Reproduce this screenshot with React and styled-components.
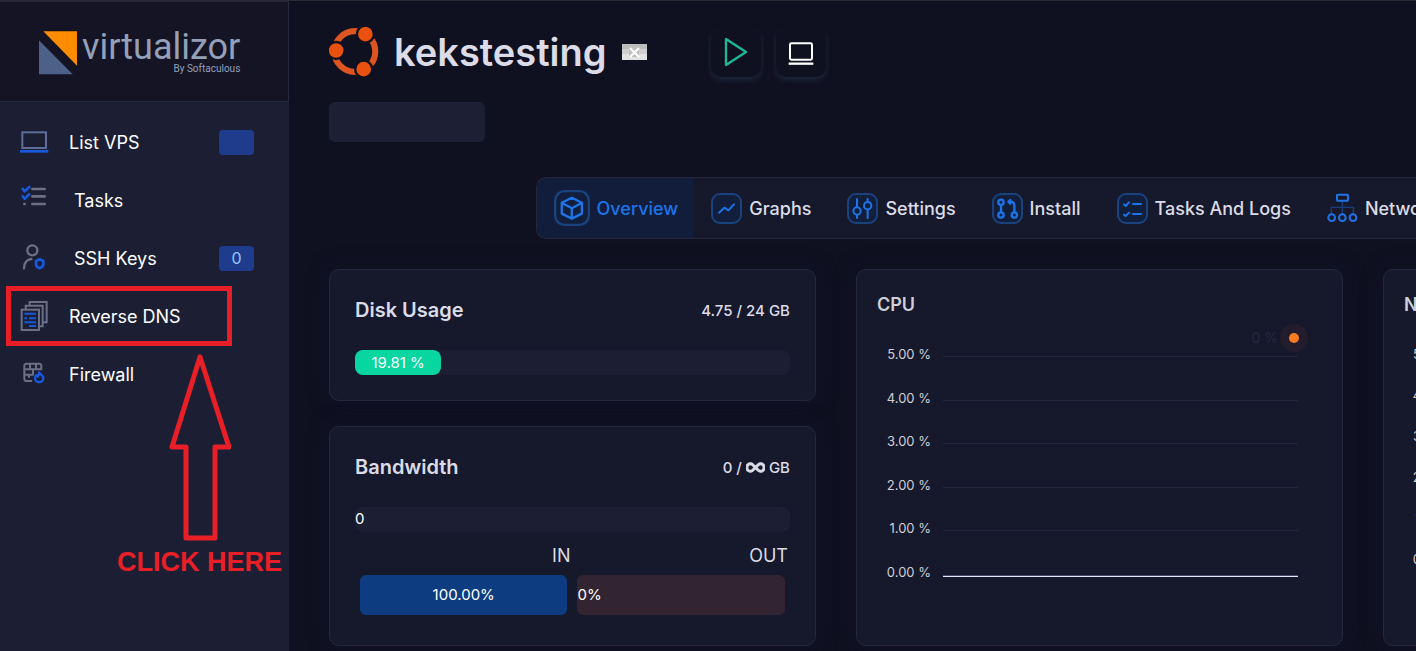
import React from 'react';
import styled, { createGlobalStyle, css } from 'styled-components';
import { FaInfinity } from 'react-icons/fa6';

const COLORS = {
  PAGE: '#0f1020',
  SIDEBAR: '#1c1f34',
  BRAND: '#141425',
  CARD: '#16182b',
  BORDER: '#25283c',
  TRACK: '#1c1f34',
  TEXT: '#dcdce8',
  WHITE: '#ffffff',
  BLUE: '#1d74e8',
  ICON_BLUE: '#1659dc',
  ICON_GRAY: '#6b7087',
  GREEN: '#08d6a0',
  RED: '#e81f27',
};

const GlobalStyle = createGlobalStyle`
  *, *::before, *::after {
    box-sizing: border-box;
  }

  body {
    margin: 0;
    background: ${COLORS.PAGE};
    color: ${COLORS.TEXT};
    font-family: Inter, "Liberation Sans", sans-serif;
    font-size: 18px;
    line-height: 24px;
  }

  h1, h2, ul, p {
    margin: 0;
    padding: 0;
  }

  button {
    font: inherit;
    cursor: pointer;
  }
`;

const Page = styled.div`
  display: flex;
  min-height: 100vh;
  border-top: 1px solid #292a34;
  overflow: hidden;
`;

const Sidebar = styled.aside`
  position: relative;
  flex: 0 0 289px;
  background: ${COLORS.SIDEBAR};
`;

const Brand = styled.a`
  display: flex;
  align-items: flex-start;
  gap: 4px;
  height: 101px;
  padding: 29px 0 0 39px;
  background: ${COLORS.BRAND};
  border: solid ${COLORS.BORDER};
  border-width: 1px 1px 1px 0;
  color: #93a0b8;
  font-family: Roboto, sans-serif;
  text-decoration: none;
`;

const BrandText = styled.span`
  display: flex;
  flex-direction: column;
  align-items: flex-end;
`;

const BrandName = styled.span`
  font-size: 36px;
  line-height: 32px;
`;

const BrandBy = styled.span`
  font-size: 10px;
  line-height: 12px;
`;

const Menu = styled.ul`
  list-style: none;
  padding-top: 11px;
`;

const MenuLink = styled.a`
  display: flex;
  align-items: center;
  height: 58px;
  padding: 0 35px 0 20px;
  color: ${COLORS.WHITE};
  line-height: 25px;
  text-decoration: none;
`;

const MenuLabel = styled.span`
  flex: 1;
  padding-left: ${(props) => (props.$indent ? '24px' : '19px')};
`;

const Badge = styled.span`
  width: 35px;
  height: 25px;
  border-radius: 4px;
  background: #1f3b8b;
  color: #93c5fd;
  font-size: 16px;
  text-align: center;
`;

const Highlight = styled.div`
  position: absolute;
  top: 285px;
  left: 6px;
  width: 226px;
  height: 60px;
  border: 5px solid ${COLORS.RED};
  pointer-events: none;
`;

const Pointer = styled.div`
  position: absolute;
  top: 351px;
  right: 7px;
  display: flex;
  flex-direction: column;
  align-items: center;
  color: ${COLORS.RED};
  font: bold 27px/32px "Liberation Sans", Arial, sans-serif;
  pointer-events: none;
`;

const Main = styled.main`
  flex: 1;
  min-width: 0;
  padding: 26px 0 5px 40px;
`;

const Header = styled.header`
  display: flex;
  align-items: center;
  gap: 15px;
`;

const Title = styled.h1`
  color: ${COLORS.TEXT};
  font-size: 38px;
  font-weight: 600;
  line-height: 50px;
`;

const Flag = styled.svg`
  width: 25px;
  height: 16px;
`;

const Actions = styled.div`
  display: flex;
  gap: 15px;
  margin-left: 49px;
`;

const ActionButton = styled.button`
  display: grid;
  place-items: center;
  width: 50px;
  height: 50px;
  padding: 0;
  border: 0;
  border-radius: 10px;
  background: ${COLORS.PAGE};
  box-shadow: 0 3px 6px rgba(70, 100, 130, 0.28);
`;

const AddressBox = styled.div`
  width: 156px;
  height: 40px;
  margin-top: 25px;
  border-radius: 6px;
  background: #1d2035;
`;

const Tabs = styled.nav`
  display: flex;
  height: 62px;
  margin: 35px 0 30px 19%;
  border: 1px solid ${COLORS.BORDER};
  border-right: 0;
  border-radius: 10px 0 0 10px;
  background: ${COLORS.CARD};
  overflow: hidden;
`;

const Tab = styled.button`
  display: flex;
  flex: none;
  align-items: center;
  gap: 7px;
  padding: 0 18px;
  border: 0;
  background: none;
  color: ${COLORS.TEXT};
  font-weight: 500;
  line-height: 25px;

  ${(props) => props.$active && css`
    padding: 0 15px 0 17px;
    background: #121d3c;
    color: ${COLORS.BLUE};
  `}
`;

const TabIcon = styled.svg`
  width: ${(props) => (props.$active ? '36px' : '31px')};
  height: ${(props) => (props.$active ? '36px' : '31px')};
  fill: none;
  stroke: ${COLORS.BLUE};
  stroke-width: 6;
  stroke-linecap: round;
  stroke-linejoin: round;
`;

const Board = styled.div`
  display: grid;
  grid-auto-flow: column;
  grid-auto-columns: max(420px, 44.8%);
  gap: 40px;
`;

const Column = styled.div`
  display: flex;
  flex-direction: column;
  gap: 25px;
`;

const Card = styled.section`
  position: relative;
  padding: 25px;
  border: 1px solid ${COLORS.BORDER};
  border-radius: 10px;
  background: ${COLORS.CARD};
  box-shadow: 0 0 20px rgba(20, 22, 45, 0.6);
`;

const CardHeader = styled.div`
  display: flex;
  align-items: center;
  justify-content: space-between;
  height: 30px;
  margin-bottom: 25px;
`;

const CardTitle = styled.h2`
  font-size: 20px;
  font-weight: 600;
`;

const Amount = styled.span`
  display: flex;
  align-items: center;
  gap: 4px;
  font-size: 15px;
  font-weight: 500;
  line-height: 25px;

  svg {
    stroke: currentColor;
    stroke-width: 36px;
  }
`;

const Track = styled.div`
  height: 25px;
  border-radius: 8px;
  background: ${COLORS.TRACK};
  color: ${COLORS.WHITE};
  font-size: 15px;
`;

const Fill = styled.div`
  height: 100%;
  border-radius: 8px;
  background: ${COLORS.GREEN};
  line-height: 25px;
  text-align: center;
`;

const Traffic = styled.div`
  display: grid;
  grid-template-columns: 1fr 1fr;
  padding: 12px 0 5px;
`;

const TrafficLabel = styled.p`
  padding-right: 2px;
  text-align: right;
`;

const TrafficBar = styled.div`
  height: 40px;
  margin: 7px 5px 0;
  border-radius: 6px;
  background: ${(props) => (props.$inbound ? '#0d3d80' : '#322431')};
  color: ${COLORS.WHITE};
  font-size: 15px;
  line-height: 40px;
  text-align: ${(props) => (props.$inbound ? 'center' : 'left')};
`;

const ChartCard = styled(Card)`
  padding: 23px 44px 30px 20px;
`;

const ChartTitle = styled(CardTitle)`
  color: #cfcfd8;
  font-size: 18px;
`;

const Legend = styled.div`
  position: absolute;
  top: 53px;
  right: 33px;
  display: flex;
  align-items: center;
  gap: 1px;
  color: #25283b;
  font-size: 14px;
`;

const Plot = styled.div`
  display: flex;
  flex-direction: column;
  justify-content: space-between;
  height: ${(props) => (props.$short ? '227px' : '240px')};
  margin-top: 26px;
`;

const Tick = styled.div`
  display: flex;
  align-items: center;
  height: 22px;
  color: #cfcfd8;
  font-size: 13px;
`;

const TickLabel = styled.span`
  width: ${(props) => (props.$wide ? '72px' : '54px')};
  text-align: right;
  white-space: nowrap;
`;

const GridLine = styled.span`
  flex: 1;
  height: ${(props) => (props.$base ? '2px' : '1px')};
  margin: ${(props) => (props.$base ? '8px' : '5px')} 0 0 12px;
  border-bottom: 1px solid ${(props) => (props.$base ? '#e4e6f6' : '#23263a')};
  background: ${(props) => (props.$base ? '#44486b' : 'none')};
`;

const Svg = ({ size = 30, children }) => (
  <svg width={size} height={size} viewBox="0 0 90 90" fill="none" aria-hidden="true">
    {children}
  </svg>
);

const ListIcon = () => (
  <Svg>
    <rect x="7" y="16" width="71" height="47" stroke="#5f6e98" strokeWidth="6" />
    <path d="M0 73h85" stroke={COLORS.ICON_BLUE} strokeWidth="8" />
  </Svg>
);

const TasksIcon = () => (
  <Svg>
    <g strokeWidth="8" strokeLinecap="round" strokeLinejoin="round">
      <path d="M37 12h37M37 34h37M37 57h37M13 57h1" stroke={COLORS.ICON_GRAY} />
      <path d="M8 12l6 7L28 6M8 34l6 7L28 28" stroke={COLORS.ICON_BLUE} />
    </g>
  </Svg>
);

const KeysIcon = () => (
  <Svg>
    <g strokeWidth="7" strokeLinecap="round" strokeLinejoin="round">
      <circle cx="37" cy="22" r="15" stroke={COLORS.ICON_GRAY} />
      <path d="M12 76c0-18 10-27 22-28" stroke={COLORS.ICON_GRAY} />
      <path d="M59 49l11 5v10c0 6-5 10-11 12-6-2-11-6-11-12V54z" stroke={COLORS.ICON_BLUE} strokeWidth="8" />
    </g>
  </Svg>
);

const DnsIcon = () => (
  <Svg>
    <g stroke={COLORS.ICON_GRAY} strokeWidth="6">
      <path d="M29 14V3h51v61H68" />
      <path d="M17 25V14h51v62H57" />
      <rect x="5" y="26" width="52" height="61" />
    </g>
    <path d="M13 38h35M13 52h8M27 52h21M13 64h35M27 75h21" stroke={COLORS.ICON_BLUE} strokeWidth="6" />
  </Svg>
);

const FirewallIcon = () => (
  <Svg>
    <g stroke={COLORS.ICON_GRAY} strokeWidth="6" strokeLinejoin="round" strokeLinecap="round">
      <path d="M34 66H20q-7 0-7-7V21q0-7 7-7h37q7 0 7 7v10H13M30 14v16M48 14v16M39 31v16H13M27 48v6" />
    </g>
    <path d="M57 40c2 5 13 8 13 17a12 12 0 0 1-25 0c0-5 3-8 5-9l3 5c3-3 5-8 4-13z" stroke={COLORS.ICON_BLUE} strokeWidth="7" strokeLinejoin="round" />
  </Svg>
);

const LogoIcon = () => (
  <svg width="39" height="45" viewBox="0 0 117 135" aria-hidden="true">
    <path d="M13 1h101v103z" fill="#fd8c00" />
    <path d="M0 28v102h101z" fill="#4d6087" />
  </svg>
);

const UbuntuIcon = () => (
  <svg width="50" height="50" viewBox="0 0 147 147" role="img" aria-label="Ubuntu">
    <circle cx="76" cy="72" r="60" fill="none" stroke="#dd5520" strokeWidth="18" />
    <g fill="#ea500e" stroke={COLORS.PAGE} strokeWidth="7">
      <circle cx="21" cy="69" r="25" />
      <circle cx="107" cy="21" r="25" />
      <circle cx="102" cy="124" r="25" />
    </g>
  </svg>
);

const PlayIcon = () => (
  <svg width="26" height="30" viewBox="0 0 78 90" fill="none" aria-hidden="true">
    <path d="M9 6v78l60-39z" stroke="#1db991" strokeWidth="7" strokeLinejoin="round" />
  </svg>
);

const ConsoleIcon = () => (
  <svg width="26" height="26" viewBox="0 0 78 78" fill="none" aria-hidden="true">
    <rect x="6" y="13" width="66" height="49" rx="4" stroke="#fff" strokeWidth="6" />
    <path d="M2 74h74" stroke="#fff" strokeWidth="7" />
  </svg>
);

const Frame = () => (
  <rect x="3" y="3" width="87" height="87" rx="24" fill="#121f3c" stroke="#19427f" strokeWidth="6" />
);

const TAB_ICONS = {
  overview: (
    <>
      <Frame />
      <path d="M46 20l26 13v28L46 74 20 61V33zM20 33l26 14 26-14M46 47v27" />
    </>
  ),
  graphs: (
    <>
      <Frame />
      <path d="M24 59l16-15 12 8 17-18" />
    </>
  ),
  settings: (
    <>
      <Frame />
      <circle cx="30" cy="54" r="11" />
      <circle cx="62" cy="38" r="11" />
      <path d="M30 18v23M30 67v8M62 18v8M62 51v24" />
    </>
  ),
  install: (
    <>
      <Frame />
      <g strokeWidth="7">
        <circle cx="27" cy="28" r="8" />
        <circle cx="27" cy="66" r="8" />
        <circle cx="67" cy="66" r="8" />
        <path d="M27 38v18M67 56V38q0-12-12-12h-4M55 21l-6 5 6 6" />
      </g>
    </>
  ),
  tasks: (
    <>
      <Frame />
      <path d="M21 34l5 5 10-11M48 33h24M21 65l5 4 10-10M48 63h24" />
    </>
  ),
  network: (
    <>
      <path d="M46 24v40M13 62V43h66v19" stroke="#1b3d7c" strokeWidth="4" />
      <rect x="30" y="5" width="33" height="18" rx="2" />
      <circle cx="14" cy="74" r="10" />
      <circle cx="46" cy="74" r="10" />
      <circle cx="78" cy="74" r="10" />
    </>
  ),
};

const MENU = [
  { label: 'List VPS', icon: <ListIcon />, badge: '' },
  { label: 'Tasks', icon: <TasksIcon />, indent: true },
  { label: 'SSH Keys', icon: <KeysIcon />, indent: true, badge: '0' },
  { label: 'Reverse DNS', icon: <DnsIcon /> },
  { label: 'Firewall', icon: <FirewallIcon /> },
];

const TABS = [
  { id: 'overview', label: 'Overview' },
  { id: 'graphs', label: 'Graphs' },
  { id: 'settings', label: 'Settings' },
  { id: 'install', label: 'Install' },
  { id: 'tasks', label: 'Tasks And Logs' },
  { id: 'network', label: 'Network' },
];

const TICKS = ['5.00', '4.00', '3.00', '2.00', '1.00', '0.00'];

const Chart = ({ title, unit, short = false }) => (
  <ChartCard>
    <ChartTitle>{title}</ChartTitle>
    {!short && (
      <Legend>
        <span>0 {unit}</span>
        <svg width="30" height="30" viewBox="0 0 30 30" aria-hidden="true">
          <circle cx="15" cy="15" r="14" fill="#231c2d" />
          <circle cx="15" cy="15" r="5" fill="#f97b22" />
        </svg>
      </Legend>
    )}
    <Plot $short={short}>
      {TICKS.map((tick) => (
        <Tick key={tick}>
          <TickLabel $wide={short}>{tick} {unit}</TickLabel>
          <GridLine $base={tick === '0.00'} />
        </Tick>
      ))}
    </Plot>
  </ChartCard>
);

const App = () => {
  const diskPercent = 19.81;

  return (
    <>
      <GlobalStyle />
      <Page>
        <Sidebar>
          <Brand href="#home">
            <LogoIcon />
            <BrandText>
              <BrandName>virtualizor</BrandName>
              <BrandBy>By Softaculous</BrandBy>
            </BrandText>
          </Brand>
          <nav>
            <Menu>
              {MENU.map((item) => (
                <li key={item.label}>
                  <MenuLink href="#menu">
                    {item.icon}
                    <MenuLabel $indent={item.indent}>{item.label}</MenuLabel>
                    {item.badge !== undefined && <Badge>{item.badge}</Badge>}
                  </MenuLink>
                </li>
              ))}
            </Menu>
          </nav>
          <Highlight />
          <Pointer>
            <svg width="64" height="194" viewBox="0 0 64 194" fill="none" aria-hidden="true">
              <path
                d="M33 5L5 95h14v91h29V95h14z"
                stroke={COLORS.RED}
                strokeWidth="5"
                strokeLinejoin="round"
              />
            </svg>
            CLICK HERE
          </Pointer>
        </Sidebar>

        <Main>
          <Header>
            <UbuntuIcon />
            <Title>kekstesting</Title>
            <Flag viewBox="0 0 25 16" aria-hidden="true">
              <path d="M0 0h25v16H0z" fill="#e2e2e2" />
              <path d="M0 0h25v5H0z" fill="#bcbcbc" />
              <path d="M0 5h25v5H0z" fill="#cfcfcf" />
              <path d="M7 3h10v10H7z" fill="#c0c0c0" />
              <path d="M8 4l9 9M17 4l-9 9" stroke="#fff" strokeWidth="2" />
            </Flag>
            <Actions>
              <ActionButton aria-label="Start"><PlayIcon /></ActionButton>
              <ActionButton aria-label="Console"><ConsoleIcon /></ActionButton>
            </Actions>
          </Header>
          <AddressBox />

          <Tabs>
            {TABS.map((tab) => {
              const active = tab.id === 'overview';
              return (
                <Tab key={tab.id} type="button" $active={active}>
                  <TabIcon $active={active} viewBox="0 0 93 93" aria-hidden="true">
                    {TAB_ICONS[tab.id]}
                  </TabIcon>
                  {tab.label}
                </Tab>
              );
            })}
          </Tabs>

          <Board>
            <Column>
              <Card>
                <CardHeader>
                  <CardTitle>Disk Usage</CardTitle>
                  <Amount>4.75 / 24 GB</Amount>
                </CardHeader>
                <Track>
                  <Fill style={{ width: `${diskPercent}%` }}>{diskPercent} %</Fill>
                </Track>
              </Card>
              <Card>
                <CardHeader>
                  <CardTitle>Bandwidth</CardTitle>
                  <Amount>0 / <FaInfinity size={19} /> GB</Amount>
                </CardHeader>
                <Track>0</Track>
                <Traffic>
                  <div>
                    <TrafficLabel>IN</TrafficLabel>
                    <TrafficBar $inbound>100.00%</TrafficBar>
                  </div>
                  <div>
                    <TrafficLabel>OUT</TrafficLabel>
                    <TrafficBar>0%</TrafficBar>
                  </div>
                </Traffic>
              </Card>
            </Column>
            <Chart title="CPU" unit="%" />
            <Chart title="Network" unit="MB/s" short />
          </Board>
        </Main>
      </Page>
    </>
  );
};

export default App;
